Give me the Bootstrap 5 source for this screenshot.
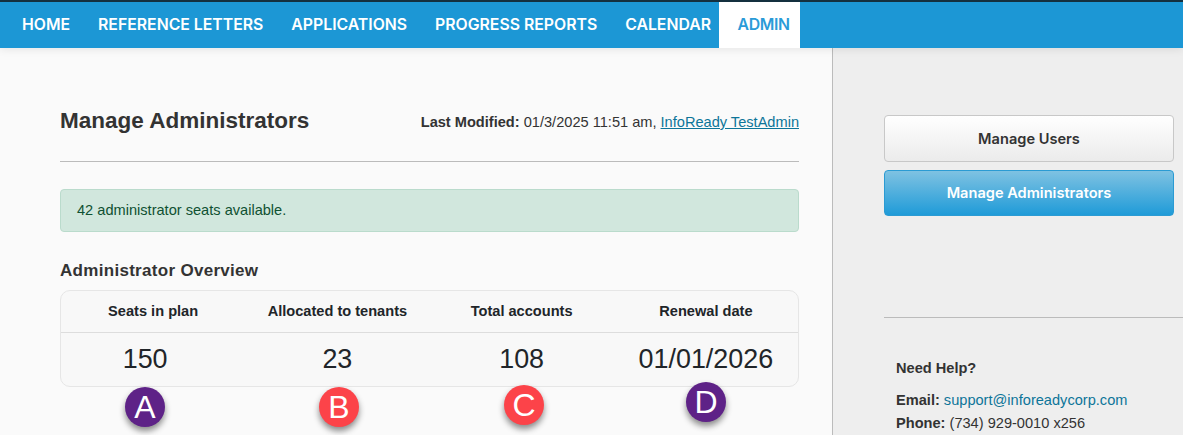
<!DOCTYPE html>
<html lang="en">
<head>
<meta charset="utf-8">
<title>Manage Administrators</title>
<link href="https://cdn.jsdelivr.net/npm/bootstrap@5.3.0/dist/css/bootstrap.min.css" rel="stylesheet">
<style>
html,body{height:435px;overflow:hidden}
body{font-family:"Liberation Sans",Arial,sans-serif;font-size:14.6px;color:#333;background:#eee}
.topnav{background:#1c97d5;border-top:2px solid #14303f;height:48px;padding:0;align-items:stretch;flex-wrap:nowrap;position:relative;z-index:2;box-shadow:0 2px 8px rgba(0,0,0,.08)}
.topnav .topnav-list{display:flex;flex-direction:row;list-style:none;margin:0;padding:0 0 0 8px}
.topnav a{display:flex;align-items:center;height:46px;padding:0 14px;color:#fff;text-decoration:none;font-family:Inter,sans-serif;font-weight:600;font-size:15.8px;white-space:nowrap}
.topnav a.on{background:#fff;color:#2a9bd8;margin-left:-5.5px;padding:0 10px 0 18px;letter-spacing:-.3px}
.shell{height:387px;overflow:hidden}
.mainpane{width:833px;flex:none;background:#fafafa;border-right:1px solid #bbb;padding:0 33px 0 60px;position:relative}
.pagehead{height:114px;padding-top:57px;border-bottom:1px solid #bbb;margin-bottom:27px;align-items:flex-start}
.pagehead h1{font-size:22.5px;font-weight:700;margin:0;color:#333;line-height:32px}
.modline{line-height:20px;margin-top:7px;color:#333}
.modline a,.helpbox a{color:#0d7599}
.seatnote{background:#d1e7dd;border:1px solid #badbcc;color:#0f5132;border-radius:4px;height:43px;padding:0 16px;margin:0 0 28px;display:flex;align-items:center}
.overview-title{font-size:17px;font-weight:700;line-height:22px;margin:0 0 8px;color:#333;letter-spacing:.3px}
.statgrid{border:1px solid #e6e6e6;border-radius:10px;background:#f8f8f8;height:97px;overflow:hidden}
.statcell{flex:0 0 25%;text-align:center}
.stathead{height:42px;border-bottom:1px solid #ddd}
.stathead .statcell{font-weight:700;line-height:41px;color:#212529}
.statvals .statcell{font-size:26.9px;line-height:53px;color:#212529}
.statvals .statcell.nudge{padding-right:16px}
.pin{position:absolute;width:40px;height:40px;border-radius:50%;color:#fff;font-size:32px;line-height:40px;text-align:center;box-shadow:0 4px 6px rgba(0,0,0,.45)}
.pin-purple{background:#5e2287}
.pin-red{background:#fc4349}
.sidepane{flex:1 1 0;padding:67px 0 0 51px;background:#eee}
.sidebtn{display:block;width:290px;height:47px;line-height:47px;text-align:center;padding:0;border-radius:4px;font-family:Inter,sans-serif;font-weight:600;font-size:14.6px}
.sidebtn-light{background:linear-gradient(#fff,#ebebeb);border:1px solid #c8c8c8;color:#333;margin-bottom:8px}
.sidebtn-blue{background:linear-gradient(#7fc2e2,#1f9bd8);border:1px solid #2b9bd3;color:#fff;height:46px;line-height:45px}
.siderule{border-top:1px solid #bbb;margin:101px 0 0;opacity:1}
.helpbox{padding:40px 0 0 12px;line-height:23px}
.helpbox h2{font-size:14.6px;font-weight:700;margin:0 0 11px;line-height:20px}
</style>
</head>
<body>
<nav class="navbar topnav">
  <ul class="topnav-list">
    <li><a href="#">HOME</a></li>
    <li><a href="#">REFERENCE LETTERS</a></li>
    <li><a href="#">APPLICATIONS</a></li>
    <li><a href="#">PROGRESS REPORTS</a></li>
    <li><a href="#">CALENDAR</a></li>
    <li><a href="#" class="on">ADMIN</a></li>
  </ul>
</nav>
<div class="d-flex shell">
  <main class="mainpane">
    <div class="d-flex justify-content-between pagehead">
      <h1>Manage Administrators</h1>
      <div class="modline"><b>Last Modified:</b> 01/3/2025 11:51 am, <a href="#">InfoReady TestAdmin</a></div>
    </div>
    <div class="seatnote" role="alert">42 administrator seats available.</div>
    <h2 class="overview-title">Administrator Overview</h2>
    <div class="statgrid">
      <div class="d-flex stathead">
        <div class="statcell">Seats in plan</div>
        <div class="statcell">Allocated to tenants</div>
        <div class="statcell">Total accounts</div>
        <div class="statcell">Renewal date</div>
      </div>
      <div class="d-flex statvals">
        <div class="statcell nudge">150</div>
        <div class="statcell">23</div>
        <div class="statcell">108</div>
        <div class="statcell">01/01/2026</div>
      </div>
    </div>
    <span class="pin pin-purple" style="left:125px;top:339px">A</span>
    <span class="pin pin-red" style="left:319px;top:339px">B</span>
    <span class="pin pin-red" style="left:504px;top:337px">C</span>
    <span class="pin pin-purple" style="left:686px;top:334px">D</span>
  </main>
  <aside class="sidepane">
    <a href="#" class="btn sidebtn sidebtn-light">Manage Users</a>
    <a href="#" class="btn sidebtn sidebtn-blue">Manage Administrators</a>
    <hr class="siderule">
    <div class="helpbox">
      <h2>Need Help?</h2>
      <div><b>Email:</b> <a href="#" class="text-decoration-none">support@inforeadycorp.com</a></div>
      <div><b>Phone:</b> (734) 929-0010 x256</div>
    </div>
  </aside>
</div>
</body>
</html>
